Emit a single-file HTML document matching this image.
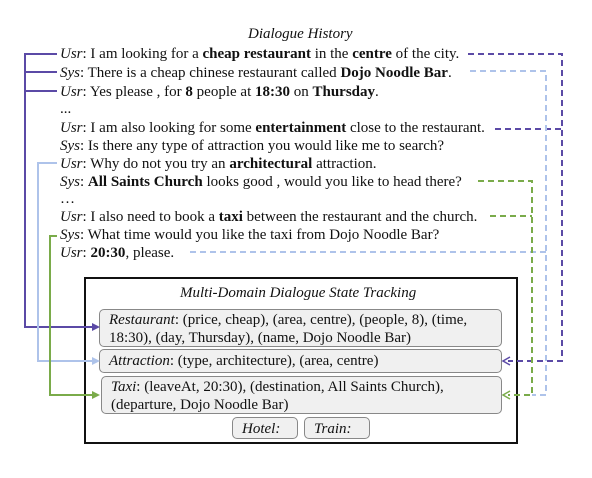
<!DOCTYPE html>
<html><head><meta charset="utf-8"><style>
body{margin:0;width:592px;height:478px;background:#fff;position:relative;overflow:hidden;font-family:"Liberation Serif",serif;color:#111}
.t{position:absolute;font-size:15px;white-space:nowrap;line-height:17px}
i{font-style:italic}
.bx{position:absolute;background:#f0f0f0;border:1px solid #888;border-radius:5px;font-size:15px;line-height:18px;padding:1px 0 0 9px;box-sizing:border-box;white-space:nowrap}
svg{position:absolute;left:0;top:0}
</style></head><body>
<div class="t" style="left:248px;top:26px"><i>Dialogue History</i></div>
<div class="t" style="left:60px;top:46px"><i>Usr</i>: I am looking for a <b>cheap restaurant</b> in the <b>centre</b> of the city.</div>
<div class="t" style="left:60px;top:65px"><i>Sys</i>: There is a cheap chinese restaurant called <b>Dojo Noodle Bar</b>.</div>
<div class="t" style="left:60px;top:84px"><i>Usr</i>: Yes please , for <b>8</b> people at <b>18:30</b> on <b>Thursday</b>.</div>
<div class="t" style="left:60px;top:101px">...</div>
<div class="t" style="left:60px;top:120px"><i>Usr</i>: I am also looking for some <b>entertainment</b> close to the restaurant.</div>
<div class="t" style="left:60px;top:138px"><i>Sys</i>: Is there any type of attraction you would like me to search?</div>
<div class="t" style="left:60px;top:156px"><i>Usr</i>: Why do not you try an <b>architectural</b> attraction.</div>
<div class="t" style="left:60px;top:174px"><i>Sys</i>: <b>All Saints Church</b> looks good , would you like to head there?</div>
<div class="t" style="left:60px;top:191px">…</div>
<div class="t" style="left:60px;top:209px"><i>Usr</i>: I also need to book a <b>taxi</b> between the restaurant and the church.</div>
<div class="t" style="left:60px;top:227px"><i>Sys</i>: What time would you like the taxi from Dojo Noodle Bar?</div>
<div class="t" style="left:60px;top:245px"><i>Usr</i>: <b>20:30</b>, please.</div>

<div style="position:absolute;left:84px;top:277px;width:434px;height:167px;border:2px solid #111;box-sizing:border-box"></div>
<div class="t" style="left:180px;top:285px"><i>Multi-Domain Dialogue State Tracking</i></div>
<div class="bx" style="left:99px;top:309px;width:403px;height:38px"><i>Restaurant</i>: (price, cheap), (area, centre), (people, 8), (time,<br>18:30), (day, Thursday), (name, Dojo Noodle Bar)</div>
<div class="bx" style="left:99px;top:349px;width:403px;height:24px;padding-top:2px"><i>Attraction</i>: (type, architecture), (area, centre)</div>
<div class="bx" style="left:101px;top:376px;width:401px;height:38px"><i>Taxi</i>: (leaveAt, 20:30), (destination, All Saints Church),<br>(departure, Dojo Noodle Bar)</div>
<div class="bx" style="left:232px;top:417px;width:66px;height:22px;padding-top:2px"><i>Hotel:</i></div>
<div class="bx" style="left:304px;top:417px;width:66px;height:22px;padding-top:2px"><i>Train:</i></div>

<svg width="592" height="478" fill="none" stroke-width="2">
<g stroke="#5b4aa6">
<path d="M57 54H25V327H92M57 72H25M57 91H25"/>
<path d="M468 54H562V361H508M495 129H562" stroke-dasharray="6,4"/>
<path d="M92 323l8 4-8 4z" fill="#5b4aa6" stroke="none"/>
<path d="M510 357l-7 4 7 4" stroke-width="1.5"/>
</g>
<g stroke="#aec3ea">
<path d="M57 163H38V361H92"/>
<path d="M470 71H546V395H532M190 252H546" stroke-dasharray="6,4"/>
<path d="M92 357l8 4-8 4z" fill="#aec3ea" stroke="none"/>
</g>
<g stroke="#7aab4a">
<path d="M57 236H50V395H92"/>
<path d="M478 181H532V395H508M490 216H532" stroke-dasharray="6,4"/>
<path d="M92 391l8 4-8 4z" fill="#7aab4a" stroke="none"/>
<path d="M510 391l-7 4 7 4" stroke-width="1.5"/>
</g>
</svg>
</body></html>
